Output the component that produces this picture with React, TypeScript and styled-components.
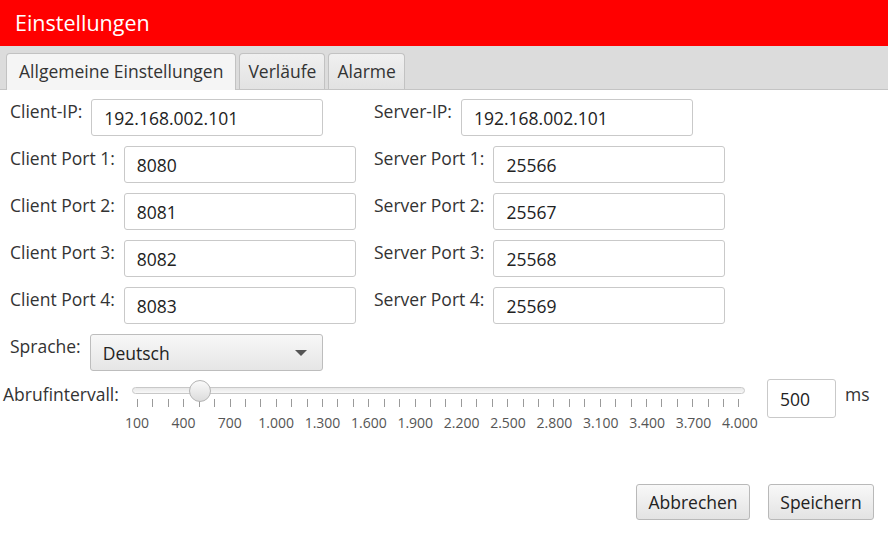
import * as React from "react";
import styled, { createGlobalStyle } from "styled-components";

const clientPorts = ["8080", "8081", "8082", "8083"];
const serverPorts = ["25566", "25567", "25568", "25569"];
const tickLabels = [
  "100", "400", "700", "1.000", "1.300", "1.600", "1.900",
  "2.200", "2.500", "2.800", "3.100", "3.400", "3.700", "4.000",
];
const MIN = 100;
const MAX = 4000;
const interval = 500;

class App extends React.Component {
  public render() {
    const pos = (interval - MIN) / (MAX - MIN);
    return (
      <Window>
        <GlobalStyle />
        <Header>Einstellungen</Header>
        <TabBar>
          <Tab active>Allgemeine Einstellungen</Tab>
          <Tab>Verläufe</Tab>
          <Tab>Alarme</Tab>
        </TabBar>
        <Content>
          <FieldGrid>
            <Field>
              <Label>Client-IP:</Label>
              <Input defaultValue="192.168.002.101" />
            </Field>
            <Field>
              <Label>Server-IP:</Label>
              <Input defaultValue="192.168.002.101" />
            </Field>
            {clientPorts.map((p, i) => (
              <React.Fragment key={p}>
                <Field>
                  <Label>Client Port {i + 1}:</Label>
                  <Input defaultValue={p} />
                </Field>
                <Field>
                  <Label>Server Port {i + 1}:</Label>
                  <Input defaultValue={serverPorts[i]} />
                </Field>
              </React.Fragment>
            ))}
            <Field>
              <Label>Sprache:</Label>
              <Select>
                <span>Deutsch</span>
                <Arrow />
              </Select>
            </Field>
          </FieldGrid>
          <SliderRow>
            <SliderLabel>Abrufintervall:</SliderLabel>
            <Slider>
              <Track>
                <Thumb style={{ left: `calc(5px + (100% - 10px) * ${pos})` }} />
              </Track>
              <Ticks>
                {Array.from({ length: 40 }).map((_, i) => (
                  <Tick key={i} />
                ))}
              </Ticks>
              <TickLabels>
                {tickLabels.map((t) => (
                  <TickLabel key={t}>
                    <span>{t}</span>
                  </TickLabel>
                ))}
              </TickLabels>
            </Slider>
            <ValueInput defaultValue="500" />
            <Unit>ms</Unit>
          </SliderRow>
        </Content>
        <Footer>
          <Button width={114}>Abbrechen</Button>
          <Button width={106}>Speichern</Button>
        </Footer>
      </Window>
    );
  }
}

const GlobalStyle = createGlobalStyle`
  html, body {
    margin: 0;
    padding: 0;
    background: #ffffff;
  }
  body {
    font-family: "Open Sans", "Noto Sans", sans-serif;
  }
`;

const Window = styled.div`
  width: 888px;
  height: 534px;
  display: flex;
  flex-direction: column;
  background: #ffffff;
  overflow: hidden;
`;

const Header = styled.div`
  height: 46px;
  background: #ff0000;
  color: #ffffff;
  font-size: 21.5px;
  display: flex;
  align-items: center;
  padding-left: 15px;
  padding-bottom: 2px;
  box-sizing: border-box;
`;

const TabBar = styled.div`
  height: 43px;
  background: #dcdcdc;
  border-bottom: 1px solid #c4c4c4;
  display: flex;
  align-items: flex-end;
  gap: 3px;
  padding: 0 6px;
`;

const Tab = styled.div<{ active?: boolean }>`
  box-sizing: border-box;
  margin-bottom: ${(p) => (p.active ? "-1px" : "0")};
  height: ${(p) => (p.active ? "37px" : "36px")};
  padding: 0 ${(p) => (p.active ? "12px" : "8px")} 2px;
  display: flex;
  align-items: center;
  border: 1px solid #c2c2c2;
  border-bottom: none;
  border-radius: 4px 4px 0 0;
  background: ${(p) =>
    p.active ? "#f5f5f5" : "linear-gradient(#f0f0f0, #e2e2e2)"};
  color: #333333;
  font-size: 17.5px;
`;

const Content = styled.div`
  padding: 9px 0 0 10px;
`;

const FieldGrid = styled.div`
  display: grid;
  grid-template-columns: 364px 1fr;
  row-gap: 10px;
`;

const Field = styled.div`
  display: flex;
  align-items: flex-start;
  gap: 9px;
`;

const Label = styled.div`
  color: #333333;
  font-size: 17.5px;
  line-height: 24px;
  white-space: nowrap;
`;

const Input = styled.input`
  width: 232px;
  height: 37px;
  box-sizing: border-box;
  border: 1px solid #c9c9c9;
  border-radius: 3px;
  padding: 1px 0 0 12px;
  font-family: inherit;
  font-size: 17.5px;
  color: #222222;
  background: #ffffff;
  outline: none;
`;

const Select = styled.div`
  width: 233px;
  height: 37px;
  box-sizing: border-box;
  border: 1px solid #bdbdbd;
  border-radius: 3px;
  background: linear-gradient(#f7f7f7, #e6e6e6);
  display: flex;
  align-items: center;
  justify-content: space-between;
  padding: 1px 15px 0 12px;
  font-size: 17.5px;
  color: #222222;
`;

const Arrow = styled.div`
  width: 0;
  height: 0;
  border-left: 6px solid transparent;
  border-right: 6px solid transparent;
  border-top: 6px solid #555555;
`;

const SliderRow = styled.div`
  display: flex;
  align-items: flex-start;
  margin-top: 8px;
  margin-left: -7px;
`;

const SliderLabel = styled(Label)`
  padding-top: 3px;
  width: 129px;
`;

const Slider = styled.div`
  width: 613px;
  padding-top: 8px;
`;

const Track = styled.div`
  position: relative;
  height: 7px;
  box-sizing: border-box;
  border: 1px solid #c8c8c8;
  border-radius: 4px;
  background: linear-gradient(#e8e8e8, #f8f8f8);
`;

const Thumb = styled.div`
  position: absolute;
  top: 50%;
  width: 22px;
  height: 22px;
  box-sizing: border-box;
  border-radius: 50%;
  border: 1px solid #b4b4b4;
  background: linear-gradient(#fafafa, #dcdcdc);
  transform: translate(-50%, -50%);
`;

const Ticks = styled.div`
  display: flex;
  justify-content: space-between;
  margin: 5px 5px 0;
`;

const Tick = styled.div`
  width: 1px;
  height: 8px;
  background: #9a9a9a;
`;

const TickLabels = styled.div`
  display: flex;
  justify-content: space-between;
  margin: 6px 5px 0;
`;

const TickLabel = styled.div`
  width: 0;
  display: flex;
  justify-content: center;
  font-size: 14px;
  color: #555555;
  white-space: nowrap;
`;

const ValueInput = styled(Input)`
  width: 69px;
  height: 39px;
  margin-left: 22px;
`;

const Unit = styled(Label)`
  margin-left: 9px;
  padding-top: 3px;
`;

const Footer = styled.div`
  margin-top: auto;
  display: flex;
  justify-content: flex-end;
  gap: 18px;
  padding: 0 14px 14px 0;
`;

const Button = styled.button<{ width: number }>`
  width: ${(p) => p.width}px;
  height: 36px;
  box-sizing: border-box;
  border: 1px solid #b9b9b9;
  border-radius: 3px;
  background: linear-gradient(#f8f8f8, #e3e3e3);
  font-family: inherit;
  font-size: 17.5px;
  color: #222222;
  padding: 0;
`;

export default App;
